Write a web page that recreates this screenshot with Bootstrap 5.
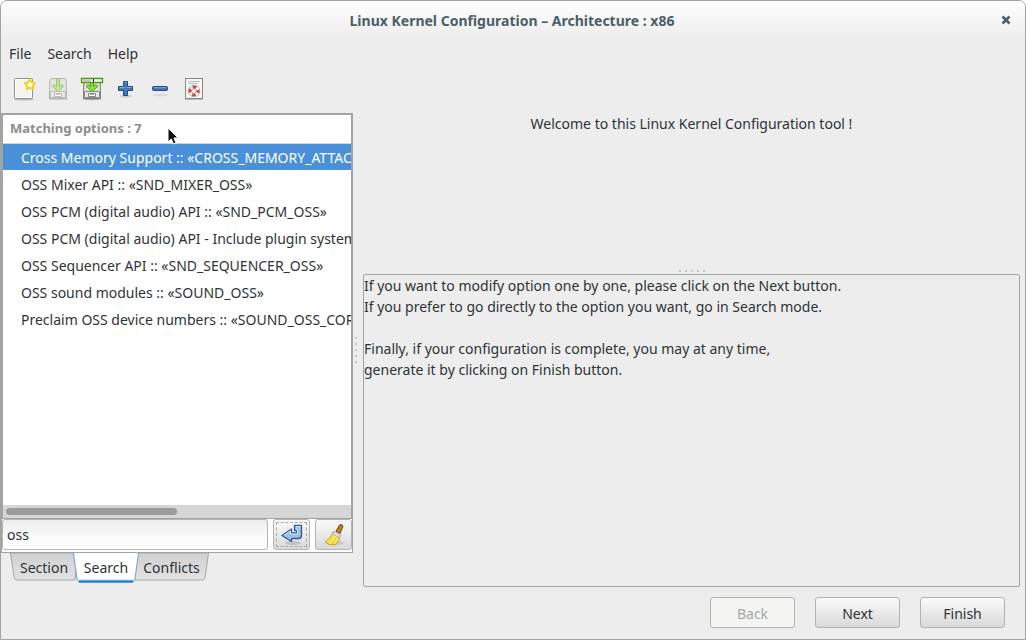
<!DOCTYPE html>
<html lang="en">
<head>
<meta charset="utf-8">
<meta name="viewport" content="width=device-width, initial-scale=1">
<title>Linux Kernel Configuration</title>
<link href="https://cdn.jsdelivr.net/npm/bootstrap@5.3.0/dist/css/bootstrap.min.css" rel="stylesheet">
<style>
  :root { --line: #a1a5a2; --ink: #2e3436; --face: #ededed; }
  body { background: #fff; color: var(--ink); font: 14px/21px "Noto Sans", "Open Sans", sans-serif; }
  button, input { color: inherit; font: inherit; }
  .app-window { background: var(--face); border: 1px solid var(--line); border-radius: 7px 7px 0 0; }
  .title-bar { height: 36px; padding: 2px 14px 0; background: linear-gradient(#fff, var(--face)); border-radius: 6px 6px 0 0; color: #4b5f66; }
  .title-bar h1 { font-size: 14px; line-height: 21px; }
  .plain-btn { border: 0; background: none; padding: 0; line-height: 1; }
  .menu-bar { height: 34px; padding: 0 8px 2px; }
  .menu-bar a { color: inherit; text-decoration: none; margin-right: 16px; }
  .tool-bar { height: 42px; padding: 1px 6px 0; }
  .tool-bar .plain-btn { width: 34px; height: 34px; }
  .side-pane { width: 352px; }
  .side-page { border: 1px solid var(--line); background: #fff; min-height: 440px; }
  .result-frame { border: 1px solid var(--line); }
  .result-list { width: 100%; }
  .result-list th { height: 28px; padding: 0 7px; color: #8b8e88; border-bottom: 1px solid #d4d4ce; font-size: 13px; }
  .result-list td { height: 27px; padding: 1px 0 0 18px; white-space: nowrap; }
  .result-list .chosen { background: #4a90d9; color: #fff; }
  .scroll-track { height: 13px; background: #d6d6d6; padding: 3px; }
  .scroll-thumb { width: 50%; height: 7px; border-radius: 4px; background: #9a9b9c; }
  .find-row { gap: 5px; padding-bottom: 2px; }
  .search-input { min-width: 0; height: 31px; padding: 0 4px; border: 1px solid #b4b7b3; border-radius: 3px; background: linear-gradient(#ededed, #fcfcfc 70%); }
  .push-btn { height: 31px; border: 1px solid #b1b4b0; border-radius: 3px; background: linear-gradient(#fafafa, #d9d9d9); padding: 0; }
  .push-btn:disabled { background: #f4f4f2; color: #a6aaa7; }
  .icon-btn { width: 37px; line-height: 1; }
  .focus-mark { border: 1px dashed #aaa; margin: 2px; }
  .tab-strip { height: 30px; padding-left: 9px; }
  .tab-btn { position: relative; height: 28px; margin-right: -5px; border: 0; background: none; padding: 0; }
  .tab-btn span { position: relative; }
  .tab-btn svg { position: absolute; inset: 0; width: 100%; height: 100%; }
  .tab-btn.current { z-index: 1; height: 30px; padding-bottom: 2px; }
  .grip-dot { width: 2px; height: 2px; background: #c6c8c6; }
  .grip-column { width: 10px; padding: 0 6px 52px 2px; }
  .main-pane { padding-right: 5px; }
  .welcome-pane { height: 156px; }
  .grip-row { height: 5px; padding-top: 1px; }
  .info-box { border: 1px solid var(--line); border-radius: 2px; }
  .action-row { padding: 10px 15px 11px; gap: 20px; }
  .action-row .push-btn { width: 85px; padding-top: 1px; }
  .pointer-mark { position: absolute; left: 164px; top: 12px; }
</style>
</head>
<body>
<main class="app-window min-vh-100 d-flex flex-column">
  <header class="title-bar d-flex align-items-center">
    <h1 class="flex-grow-1 text-center fw-bold m-0 ps-2">Linux Kernel Configuration – Architecture : x86</h1>
    <button class="plain-btn" aria-label="Close"><svg class="d-block" width="10" height="10" viewBox="0 0 10 10"><path d="M1.500 1.500l7 7M8.500 1.500l-7 7" stroke="#4b5f66" stroke-width="2.700"/></svg></button>
  </header>
  <nav class="menu-bar d-flex align-items-center"><a href="#">File</a><a href="#">Search</a><a href="#">Help</a></nav>

  <div class="tool-bar d-flex align-items-start">
    <button class="plain-btn" aria-label="New"><svg width="24" height="24" viewBox="0 0 24 24">
      <ellipse cx="12" cy="22.500" rx="10" ry="1" fill="#bbb"/><rect x="2.500" y="1.500" width="18" height="20" rx="1" fill="#f3f3f1" stroke="#90918d"/><path d="M3.500 2.500h16v18h-16z" fill="none" stroke="#fff"/>
      <path d="M18 2.500l1.700 2.800 3.300.9-2.200 2.500.3 3.300-3.100-1.300-3.100 1.300.3-3.300L13 6.200l3.300-.9z" fill="#fff" stroke="#f0d31c" stroke-width="2" stroke-linejoin="round"/></svg></button>
    <button class="plain-btn" aria-label="Save" disabled><svg width="24" height="24" viewBox="0 0 24 24" opacity=".5"><use href="#drive"/></svg></button>
    <button class="plain-btn" aria-label="Save as"><svg width="24" height="24" viewBox="0 0 24 24">
      <g id="drive"><ellipse cx="12" cy="22" rx="10" ry="1.200" fill="#aaa"/><path d="M5.500 1.500h13q1.500 0 1.700 2l.3 10v8h-17v-8l.3-10q.2-2 1.700-2z" fill="#dcdddb" stroke="#7d807b"/><path d="M4.500 14.500h15v6h-15z" fill="#e6e6e4" stroke="#8b8e88"/><path d="M8.500 16.500h7v3h-7z" fill="#fff" stroke="#888"/><path d="M10 17.500h4" stroke="#aaa"/>
      <path d="M10.500 1.500h3v8l2.500-2 1.700 1.800-5.700 5.400-5.700-5.400L8 7.500l2.500 2z" fill="#8be03c" stroke="#51a31a"/></g>
      <path d="M1.500 1.500h21v4h-21z" fill="#fff" stroke="#4e9a06" stroke-width="1.300"/><path d="M3 3.500h8" stroke="#bbb" stroke-width="2"/><path d="M13.500 2v3" stroke="#222"/></svg></button>
    <button class="plain-btn" aria-label="Expand all"><svg width="24" height="24" viewBox="0 0 24 24"><ellipse cx="12" cy="19" rx="6" ry="1.500" fill="#ccc"/>
      <path d="M9.500 4.500h4v5h5v4h-5v5h-4v-5h-5v-4h5z" fill="#4478bd" stroke="#204a87" stroke-linejoin="round"/><path d="M10.500 5.500h2M5.500 10.500h5m2 0h5" stroke="#86aedb"/></svg></button>
    <button class="plain-btn" aria-label="Collapse all"><svg width="24" height="24" viewBox="0 0 24 24"><ellipse cx="12" cy="18" rx="8" ry="1.500" fill="#dcdcdc"/><rect x="4.500" y="9.500" width="15" height="4" rx="1" fill="#4478bd" stroke="#204a87"/><path d="M6 10.500h12" stroke="#729fcf"/></svg></button>
    <button class="plain-btn" aria-label="Help"><svg width="24" height="24" viewBox="0 0 24 24"><path d="M3 22.500h18" stroke="#bbb"/><rect x="3.500" y="1.500" width="17" height="20" fill="#f6f6f5" stroke="#858782"/><path d="M6 4.500h12M6 6.500h10" stroke="#bbb"/>
      <circle cx="12" cy="14" r="4" fill="none" stroke="#888" stroke-width="4"/><circle cx="12" cy="14" r="4" fill="none" stroke="#fff" stroke-width="3"/><circle cx="12" cy="14" r="4" fill="none" stroke="#d94545" stroke-width="3" stroke-dasharray="3.700 2.583" stroke-dashoffset="1.850"/></svg></button>
  </div>

  <div class="d-flex flex-grow-1">
    <section class="side-pane flex-shrink-0 d-flex flex-column">
      <div class="side-page flex-grow-1 d-flex flex-column">
        <div class="result-frame position-relative overflow-hidden flex-grow-1 d-flex flex-column">
          <div class="flex-grow-1 overflow-hidden">
            <table class="result-list">
              <thead><tr><th scope="col">Matching options : 7</th></tr></thead>
              <tbody>
                <tr class="chosen"><td>Cross Memory Support :: «CROSS_MEMORY_ATTACH»</td></tr>
                <tr><td>OSS Mixer API :: «SND_MIXER_OSS»</td></tr>
                <tr><td>OSS PCM (digital audio) API :: «SND_PCM_OSS»</td></tr>
                <tr><td>OSS PCM (digital audio) API - Include plugin system</td></tr>
                <tr><td>OSS Sequencer API :: «SND_SEQUENCER_OSS»</td></tr>
                <tr><td>OSS sound modules :: «SOUND_OSS»</td></tr>
                <tr><td>Preclaim OSS device numbers :: «SOUND_OSS_CORE»</td></tr>
              </tbody>
            </table>
          </div>
          <div class="scroll-track"><div class="scroll-thumb"></div></div>
          <svg class="pointer-mark" width="12" height="18" viewBox="0 0 12 18"><path d="M1 1v14l3.300-3 2.200 5 2.500-1.100L6.900 11H11z" fill="#111" stroke="#fff"/></svg>
        </div>
        <form class="find-row d-flex">
          <input class="search-input flex-grow-1" type="text" value="oss" aria-label="Search options">
          <button type="button" class="push-btn icon-btn d-flex" aria-label="Find"><span class="focus-mark flex-grow-1 align-self-stretch d-flex align-items-center justify-content-center"><svg width="24" height="24" viewBox="0 0 24 24"><ellipse cx="13" cy="20" rx="8" ry="2" fill="#c3c3c3"/><path d="M14.500 2.500h7v10q0 3-3 3h-7v3L2 12.500 11.500 6v4h5V7.500h-2z" fill="#9fc0e4" stroke="#2c5d98" stroke-width="1.300" stroke-linejoin="round"/><path d="M4 12.500l6.500-4.500v3H17.500V6.500H16m0-3h4.500" fill="none" stroke="#dbe8f6"/></svg></span></button>
          <button type="button" class="push-btn icon-btn" aria-label="Clear"><svg width="24" height="24" viewBox="0 0 24 24"><ellipse cx="13" cy="20" rx="9" ry="2" fill="#c9c9c9"/><path d="M14 8.500L17.500 2q2.500-1.500 3.500 1L18 10.500z" fill="#c17d28" stroke="#714108"/><path d="M11 9q3-1 7 4-1 6-5 9-7 0-10-3 6-3 8-10z" fill="#f9e65a" stroke="#c4a60a"/><path d="M12 8l7 4-1.500 3-7-4z" fill="#e3ded6" stroke="#b5ada3"/><path d="M7 19l4-5m-1 7l4-6" stroke="#e0c62e"/></svg></button>
        </form>
      </div>
      <div class="tab-strip d-flex align-items-start" role="tablist">
        <button class="tab-btn" role="tab" style="width:68px"><svg viewBox="0 0 68 28" preserveAspectRatio="none"><path d="M.5 0L4 24q.5 3 3 3h58l3-27z" fill="url(#tab-fill)" stroke="#a5a8a5"/></svg><span>Section</span></button>
        <button class="tab-btn current" role="tab" aria-selected="true" style="width:66px"><svg viewBox="0 0 66 30" preserveAspectRatio="none"><path d="M.5 0l3.500 26q.5 3 3 3h52q2.500 0 3-3L65.500 0z" fill="#fff"/><path d="M.5 0l3.500 26q.5 3 3 3h52q2.500 0 3-3L65.500 0" fill="none" stroke="#6f9fd3"/><path d="M4 27h58" stroke="#a9cdf5"/><path d="M6 28.500h54" stroke="#1a73d9" stroke-width="2"/></svg><span>Search</span></button>
        <button class="tab-btn" role="tab" style="width:75px"><svg viewBox="0 0 77 28" preserveAspectRatio="none"><defs><linearGradient id="tab-fill" x2="0" y2="1"><stop stop-color="#d0d0d0"/><stop offset="1" stop-color="#e2e2e2"/></linearGradient></defs><path d="M3.500 0L.5 24v3H70q2.500 0 3-3l3.500-24z" fill="url(#tab-fill)" stroke="#a5a8a5"/></svg><span>Conflicts</span></button>
      </div>
      <div style="height:56px"></div>
    </section>

    <div class="grip-column d-flex flex-column justify-content-center gap-1" aria-hidden="true">
      <i class="grip-dot"></i><i class="grip-dot"></i><i class="grip-dot"></i><i class="grip-dot"></i><i class="grip-dot"></i>
    </div>

    <section class="main-pane flex-grow-1 d-flex flex-column">
      <p class="welcome-pane text-center m-0">Welcome to this Linux Kernel Configuration tool !</p>
      <div class="grip-row d-flex justify-content-center gap-1" aria-hidden="true"><i class="grip-dot"></i><i class="grip-dot"></i><i class="grip-dot"></i><i class="grip-dot"></i><i class="grip-dot"></i></div>
      <div class="info-box flex-grow-1">If you want to modify option one by one, please click on the Next button.<br>If you prefer to go directly to the option you want, go in Search mode.<br><br>Finally, if your configuration is complete, you may at any time,<br>generate it by clicking on Finish button.</div>
      <div class="action-row d-flex justify-content-end">
        <button class="push-btn" disabled>Back</button>
        <button class="push-btn">Next</button>
        <button class="push-btn">Finish</button>
      </div>
    </section>
  </div>
</main>
<script src="https://cdn.jsdelivr.net/npm/bootstrap@5.3.0/dist/js/bootstrap.bundle.min.js"></script>
</body>
</html>
